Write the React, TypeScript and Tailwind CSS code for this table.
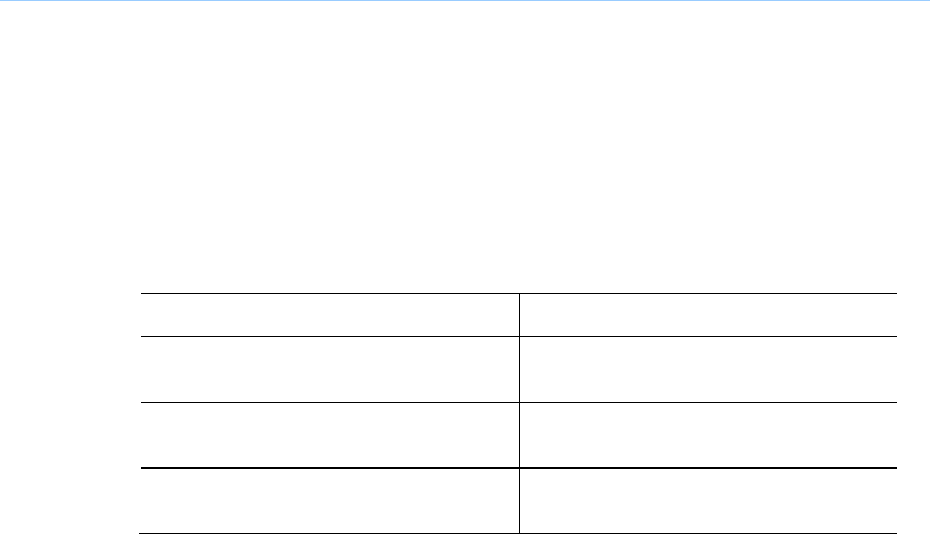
import React from "react";

const rows = [
  { h: "h-[43px]", top: "border-t" },
  { h: "h-[66px]", top: "border-t" },
  { h: "h-[65px]", top: "border-t" },
  { h: "h-[66px]", top: "border-t-2" },
];

export default function App() {
  return (
    <div className="w-[930px] h-[534px] bg-white border-t border-[#99ccff] overflow-hidden" style={{ fontFamily: '"Liberation Sans", Arial, sans-serif' }}>
      <div className="pt-[292px] pl-[141px]">
        <div className="w-[756px]">
          {rows.map((r, i) => (
            <div key={i} className={`grid grid-cols-[379px_377px] ${r.h} ${r.top} border-black`}>
              <div className="border-r border-black"></div>
              <div></div>
            </div>
          ))}
          <div className="h-px w-[758px] -ml-[2px] bg-black"></div>
        </div>
      </div>
    </div>
  );
}
